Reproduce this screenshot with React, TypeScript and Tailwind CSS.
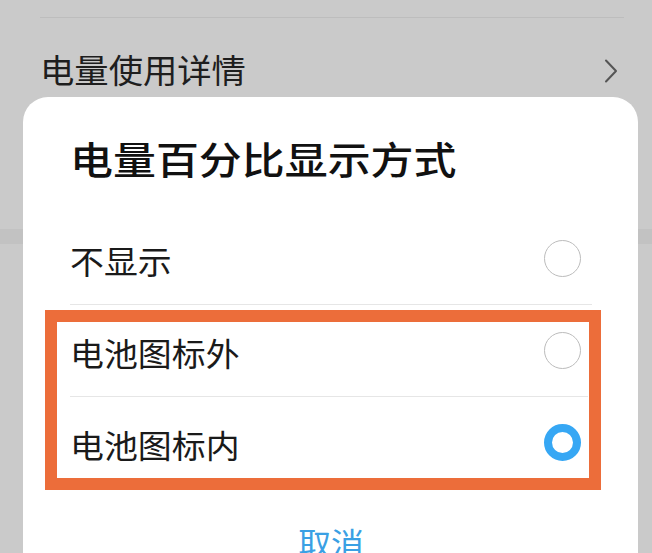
import React from "react";

const cjk = { fontFamily: '"Noto Sans CJK SC", "Noto Sans", sans-serif' };

function Radio({ checked }: { checked?: boolean }) {
  if (checked) {
    return <div className="w-[37px] h-[37px] rounded-full border-[8.5px] border-[#36a7f4] bg-white" />;
  }
  return <div className="w-[37px] h-[37px] rounded-full border-[1.5px] border-[#bcbcbc] bg-white" />;
}

function Row({ label, checked }: { label: string; checked?: boolean }) {
  return (
    <div className="flex h-[91px] items-center justify-between pr-[57px]">
      <span className="inline-block origin-left scale-x-[1.06] text-[32px] leading-none text-[#1a1a1a] pt-[2px]">{label}</span>
      <Radio checked={checked} />
    </div>
  );
}

export default function App() {
  return (
    <div className="relative w-[652px] h-[553px] overflow-hidden bg-[#cacaca]" style={cjk}>
      {/* background settings list */}
      <div className="flex flex-col">
        <div className="h-[17px]" />
        <div className="ml-[40px] mr-[28px] h-px bg-[#bdbdbd]" />
        <div className="flex h-[106px] items-center justify-between pl-[40px] pr-[33px]">
          <span className="inline-block origin-left scale-x-[1.04] text-[33px] leading-none text-[#1e1e1e] pb-[3px]">电量使用详情</span>
          <svg width="16" height="26" viewBox="0 0 16 26" fill="none">
            <path d="M3 2.5 L13 13 L3 23.5" stroke="#555" strokeWidth="2" strokeLinecap="round" strokeLinejoin="round" />
          </svg>
        </div>
        <div className="h-[105px]" />
        <div className="h-[15px] bg-[#c2c2c2]" />
      </div>

      {/* dialog */}
      <div className="absolute left-[23px] top-[97px] w-[615px] h-[520px] rounded-[25px] bg-white">
        <div className="flex h-[116px] items-center pl-[47px] pt-[6px]">
          <span className="inline-block origin-left scale-x-[1.13] text-[38px] leading-none font-medium text-[#111]">电量百分比显示方式</span>
        </div>
        <div className="pl-[47px]">
          <Row label="不显示" />
          <div className="h-px bg-[#e6e6e6] mr-[46px]" />
          <Row label="电池图标外" />
          <div className="h-px bg-[#e6e6e6] mr-[50px]" />
          <Row label="电池图标内" checked />
        </div>
        <div className="flex justify-center pt-[38px]">
          <span className="inline-block scale-x-[1.06] text-[31px] leading-none text-[#3aa0e4]">取消</span>
        </div>

        {/* orange annotation */}
        <div className="absolute left-[22px] top-[213px] w-[556px] h-[180px] border-[12px] border-[#ec6d3a]" />
      </div>
    </div>
  );
}
